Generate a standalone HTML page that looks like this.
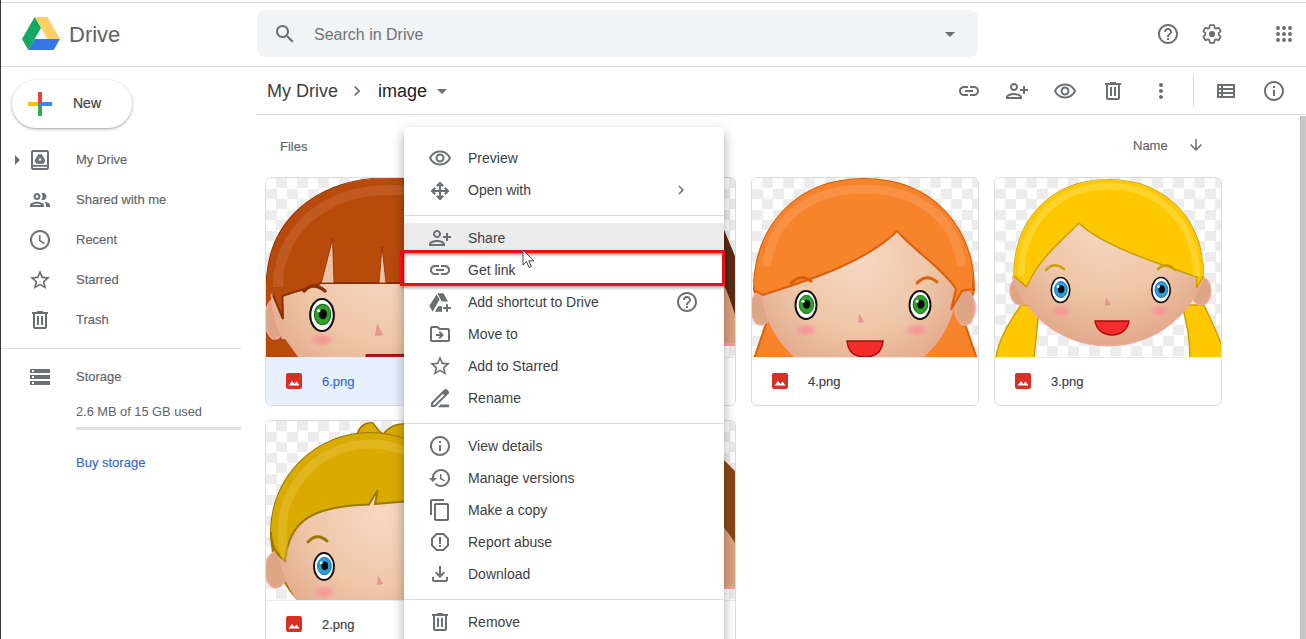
<!DOCTYPE html>
<html><head><meta charset="utf-8">
<style>
*{box-sizing:border-box;margin:0;padding:0}
html,body{width:1306px;height:639px;overflow:hidden;background:#fff;font-family:"Liberation Sans",sans-serif;color:#3c4043;position:relative}
.a{position:absolute}
.t{position:absolute;white-space:nowrap;line-height:1}
svg.i{position:absolute}
.card{position:absolute;width:228px;height:229px;border:1px solid #dadce0;border-radius:6px;overflow:hidden;background:#fff}
.card .img{position:absolute;left:0;top:0;width:226px;height:179px;overflow:hidden;
 background:conic-gradient(#ececec 25%,#fff 0 50%,#ececec 0 75%,#fff 0) 0 0/21px 21px}
.card .ft{position:absolute;left:0;top:179px;width:226px;height:49px;border-top:1px solid #e8eaed}
.card .nm{position:absolute;left:56px;top:17px;font-size:13px;color:#3c4043;line-height:1;-webkit-text-stroke:.15px currentColor}
.card .fi{position:absolute;left:20px;top:15px;width:16px;height:16px}
.mi{position:absolute;left:468px;font-size:14px;color:#3c4043;line-height:1;white-space:nowrap}
.sb{position:absolute;left:76px;font-size:13px;color:#5f6368;line-height:1;white-space:nowrap;-webkit-text-stroke:0.15px #5f6368}
</style></head><body><svg width="0" height="0" style="position:absolute">
<defs>
<radialGradient id="skin" cx="0.5" cy="0.38" r="0.6">
<stop offset="0" stop-color="#f7d8c2"/><stop offset="0.6" stop-color="#efc6a8"/><stop offset="1" stop-color="#e2ab8c"/></radialGradient>
<radialGradient id="blush"><stop offset="0" stop-color="#f7959a" stop-opacity="1"/><stop offset="0.5" stop-color="#f7959a" stop-opacity=".7"/><stop offset="1" stop-color="#f79a9a" stop-opacity="0"/></radialGradient>
</defs></svg>
<!-- top chrome line + left border -->
<div class="a" style="left:0;top:0;width:1px;height:639px;background:#3a3a3a"></div>
<div class="a" style="left:1px;top:2px;width:1305px;height:1px;background:#d9d9d9"></div>

<!-- header -->
<div class="a" style="left:1px;top:66px;width:1305px;height:1px;background:#dadce0"></div>
<svg class="a" style="left:22px;top:17px" width="38" height="33" viewBox="0 0 1443 1250">
<path fill="#3777e3" d="M240.5 1250l240.5-416.7h962l-240.5 416.7z"/>
<path fill="#ffcf63" d="M962 833.3h481L962 0H481z"/>
<path fill="#11a861" d="M0 833.3l240.5 416.7 481-833.3L481 0z"/>
</svg>
<div class="t" style="left:69px;top:24px;font-size:22px;color:#5f6368">Drive</div>

<div class="a" style="left:257px;top:10px;width:721px;height:47px;background:#f1f3f4;border-radius:8px"></div>
<div class="t" style="left:314px;top:27px;font-size:16px;color:#6f7378">Search in Drive</div>

<!-- toolbar row -->
<div class="a" style="left:256px;top:114px;width:1050px;height:1px;background:#dadce0"></div>
<div class="t" style="left:267px;top:82px;font-size:18px;color:#3c4043">My Drive</div>
<div class="t" style="left:378px;top:82px;font-size:18px;color:#202124">image</div>

<!-- scrollbar -->
<div class="a" style="left:1300px;top:116px;width:6px;height:523px;background:#c8c8c8;border-left:1px solid #bdbdbd"></div>

<!-- sidebar -->
<div class="a" style="left:12px;top:80px;width:120px;height:48px;border-radius:24px;background:#fff;box-shadow:0 1px 2px 0 rgba(60,64,67,.3),0 1px 3px 1px rgba(60,64,67,.15)"></div>
<svg class="a" style="left:28px;top:92px" width="24" height="24" viewBox="0 0 24 24">
<path d="M0 10h12v4H0z" fill="#fbbc04"/><path d="M10 12h4v12h-4z" fill="#34a853"/><path d="M12 10h12v4H12z" fill="#4285f4"/><path d="M10 0h4v12h-4z" fill="#ea4335"/></svg>
<div class="t" style="left:73px;top:96px;font-size:14px;color:#3c4043;-webkit-text-stroke:0.2px #3c4043">New</div>

<div class="sb" style="top:153px">My Drive</div>
<div class="sb" style="top:193px">Shared with me</div>
<div class="sb" style="top:233px">Recent</div>
<div class="sb" style="top:273px">Starred</div>
<div class="sb" style="top:313px">Trash</div>
<div class="a" style="left:1px;top:348px;width:240px;height:1px;background:#dadce0"></div>
<div class="sb" style="top:370px">Storage</div>
<div class="t" style="left:76px;top:406px;font-size:12.8px;color:#5f6368">2.6 MB of 15 GB used</div>
<div class="a" style="left:76px;top:427px;width:165px;height:3px;background:#e0e0e0"></div>
<div class="sb" style="top:456px;color:#3367d6;-webkit-text-stroke:0.15px #3367d6">Buy storage</div>

<!-- files -->
<div class="t" style="left:280px;top:140px;font-size:13px;color:#5f6368;-webkit-text-stroke:0.15px #5f6368">Files</div>
<div class="t" style="left:1133px;top:139px;font-size:13px;color:#5f6368;-webkit-text-stroke:0.15px #5f6368">Name</div>

<div class="card" style="left:265px;top:177px"><div class="img"><svg class="face" width="228" height="180" viewBox="0 0 228 180" style="position:absolute;left:-1px;top:-1px"><defs><clipPath id="e6"><path d="M0,0 L228,0 L228,60 L0,100 Z"/></clipPath><clipPath id="d6"><path d="M1.4,110 C1.4,45 50,1 125,1 L230,1 L230,110 Z"/><rect x="0" y="105" width="228" height="90"/></clipPath></defs>
<path d="M1.4,110 C1.4,45 50,1 125,1 L230,1 L230,181 L0,181 L0,110 Z" fill="#b84a0c"/>
<path d="M1.4,110 C1.4,45 50,1 125,1 L230,1" fill="none" stroke="#8a3000" stroke-width="1.5"/>
<ellipse cx="10" cy="142" rx="10" ry="20" fill="#dca584" stroke="#f2aaa2" stroke-width="1.5"/>
<g clip-path="url(#d6)"><circle cx="118" cy="113" r="112" fill="url(#skin)" stroke="#f0a9a0" stroke-width="1"/></g>
<path d="M0,164 L20,162 C26,170 30,176 34,181 L0,181 Z" fill="#b84a0c"/>
<g clip-path="url(#d6)">
<path d="M0,0 L0,112 L8,118 L18,142 L17.4,119 C30,114 50,110 56,106 L228,106 L228,0 Z" fill="#b84a0c"/>
<path d="M8,118 L18,142 L17.4,119 C30,114 50,110 56,106 L228,106" fill="none" stroke="#8a3000" stroke-width="2"/>
<path d="M56.3,106 L67.6,62 L69,106 Z M114,106 L117,70 L121,106 Z" fill="#eec2a1" stroke="#8a3000" stroke-width=".8"/>
</g>
<path d="M13,110 C13,55 58,13 125,13 L230,13" fill="none" stroke="#cf7040" stroke-width="10" opacity=".4"/>
<path d="M39,114 Q48,104 60,114" fill="none" stroke="#8a3000" stroke-width="3.5" stroke-linecap="round"/>
<ellipse cx="57" cy="138" rx="11.8" ry="16" fill="#fff" stroke="#111" stroke-width="2.15"/><ellipse cx="57.54" cy="137.46" rx="8.15" ry="10.30" fill="#2ea02e" stroke="#1a6a1a" stroke-width="1.07"/><ellipse cx="57.86" cy="137.14" rx="4.08" ry="5.15" fill="#0a0a0a"/><circle cx="53.78" cy="133.71" r="1.72" fill="#fff"/>
<ellipse cx="57" cy="163" rx="13" ry="7" fill="url(#blush)"/>
<path d="M112,146 L118,158 L110,159 Z" fill="#e89494"/>
<path d="M101,177.5 L150,177.5 L150,181 L101,181 Z" fill="#b8141a" stroke="#9a0a0a" stroke-width="1"/>
</svg></div><div class="ft" style="background:#e8f0fe"><svg class="fi" viewBox="0 0 16 16"><rect width="16" height="16" rx="2" fill="#d93025"/><path d="M2.5 12.5l3.5-4.5 2.5 3 2-2.5 3 4z" fill="#fff"/></svg><div class="nm" style="color:#3367d6">6.png</div></div></div>
<div class="card" style="left:508px;top:177px"><div class="img"><svg class="face" width="228" height="180" viewBox="0 0 228 180" style="position:absolute;left:-1px;top:-1px"><defs></defs><path d="M150,0 L150,180 L229,180 L229,0 Z" fill="none"/>
<path d="M150,30 L214,48 L230,86 L230,150 L216,108 L150,100 Z" fill="#5a2c12"/>
<path d="M150,100 L216,108 C222,120 226,136 230,146 L230,168 L150,168 Z" fill="#dba27f"/>
<path d="M150,166 L230,166 L230,169 L150,169 Z" fill="#f3a0a0"/>
</svg></div><div class="ft"></div></div>
<div class="card" style="left:751px;top:177px"><div class="img"><svg class="face" width="228" height="180" viewBox="0 0 228 180" style="position:absolute;left:-1px;top:-1px">
<defs><clipPath id="c4"><path d="M3,113 C3,50 45,2 113,2 C181,2 223,50 223,113 L226,182 L0,182 Z"/></clipPath></defs>
<path d="M3,113 C3,50 45,2 113,2 C181,2 223,50 223,113 L214,147 L226,182 L3,182 L15,147 Z" fill="#f7832b" stroke="#d9600d" stroke-width="2"/>
<ellipse cx="10" cy="131" rx="10" ry="17" fill="#dda684" stroke="#f2aaa2" stroke-width="1.5"/>
<ellipse cx="214" cy="131" rx="10" ry="17" fill="#dda684" stroke="#f2aaa2" stroke-width="1.5"/>
<circle cx="108" cy="106" r="98" fill="url(#skin)" stroke="#f0a9a0" stroke-width="1"/>
<g clip-path="url(#c4)">
<path d="M0,0 L0,100 L3,113 L12,118 C40,108 110,90 146,54 C165,75 192,92 205,112 L200,133 L211,114 L222,112 L228,0 Z" fill="#f7832b" stroke="#d9600d" stroke-width="2"/>
<path d="M0,0 L228,0 L228,60 A110,110 0 0 0 0,60 Z" fill="#f7832b"/>
<path d="M16,85 C22,45 55,12 113,12 C171,12 204,45 210,85" fill="none" stroke="#fba463" stroke-width="9" stroke-linecap="round" opacity=".42"/>
</g>
<path d="M40,106 Q50,96 60,104" fill="none" stroke="#d9600d" stroke-width="3" stroke-linecap="round"/>
<path d="M166,106 Q176,96 186,105" fill="none" stroke="#d9600d" stroke-width="3" stroke-linecap="round"/>
<ellipse cx="55" cy="128" rx="10.5" ry="14" fill="#fff" stroke="#111" stroke-width="1.91"/><ellipse cx="55.48" cy="127.52" rx="7.25" ry="9.16" fill="#2ea02e" stroke="#1a6a1a" stroke-width="0.95"/><ellipse cx="55.76" cy="127.24" rx="3.63" ry="4.58" fill="#0a0a0a"/><circle cx="52.14" cy="124.18" r="1.53" fill="#fff"/>
<ellipse cx="169" cy="128" rx="10.5" ry="14" fill="#fff" stroke="#111" stroke-width="1.91"/><ellipse cx="169.48" cy="127.52" rx="7.25" ry="9.16" fill="#2ea02e" stroke="#1a6a1a" stroke-width="0.95"/><ellipse cx="169.76" cy="127.24" rx="3.63" ry="4.58" fill="#0a0a0a"/><circle cx="166.14" cy="124.18" r="1.53" fill="#fff"/>
<ellipse cx="55" cy="153" rx="12" ry="7" fill="url(#blush)"/><ellipse cx="166" cy="153" rx="12" ry="7" fill="url(#blush)"/>
<path d="M108,136 L113,145 L107,146 Z" fill="#e89494"/>
<path d="M96,164 L132,164 C131,175 124,180 114,180 C104,180 97,175 96,164 Z" fill="#f42c2c" stroke="#a80c0c" stroke-width="1.5"/>
</svg></div><div class="ft"><svg class="fi" viewBox="0 0 16 16"><rect width="16" height="16" rx="2" fill="#d93025"/><path d="M2.5 12.5l3.5-4.5 2.5 3 2-2.5 3 4z" fill="#fff"/></svg><div class="nm">4.png</div></div></div>
<div class="card" style="left:994px;top:177px"><div class="img"><svg class="face" width="228" height="180" viewBox="0 0 228 180" style="position:absolute;left:-1px;top:-1px"><defs><clipPath id="c3"><path d="M20,99 C20,40 60,2.7 114.6,2.7 C169,2.7 209.3,40 209.3,99 Z"/><rect x="0" y="99" width="228" height="90"/></clipPath><clipPath id="d3"><path d="M20,99 C20,40 60,2.7 114.6,2.7 C169,2.7 209.3,40 209.3,99 Z"/><rect x="19" y="98" width="191" height="16"/></clipPath></defs>
<path d="M27,128 L44,128 C45,140 42,160 40,181 L2,181 C4,165 12,150 27,128 Z" fill="#fdc800" stroke="#c9a000" stroke-width="1.5"/>
<path d="M188,128 L210,128 C218,145 226,162 229,172 L229,181 L196,181 C196,160 192,142 188,128 Z" fill="#fdc800" stroke="#c9a000" stroke-width="1.5"/>
<path d="M20,99 C20,40 60,2.7 114.6,2.7 C169,2.7 209.3,40 209.3,99 L209,112 L22,112 Z" fill="#fdc800" stroke="#c9a000" stroke-width="1.5"/>
<ellipse cx="26" cy="114" rx="10" ry="14" fill="#dca584" stroke="#f2aaa2" stroke-width="1.2"/>
<ellipse cx="207" cy="114" rx="10" ry="14" fill="#dca584" stroke="#f2aaa2" stroke-width="1.2"/>
<g clip-path="url(#c3)"><circle cx="114" cy="68" r="101" fill="url(#skin)" stroke="#f0a9a0" stroke-width="1"/></g>
<g clip-path="url(#d3)">
<path d="M0,0 L0,99 L20,99 L32.7,110 C45,80 70,62 85,46 C105,66 150,82 203,100 L202.5,111 L209.3,99 L228,99 L228,0 Z" fill="#fdc800"/><path d="M20,99 L32.7,110 C45,80 70,62 85,46 C105,66 150,82 203,100 L202.5,111 L209.3,99" fill="none" stroke="#c9a000" stroke-width="1.5"/>
<path d="M27,99 C27,46 64,9 114.6,9 C165,9 202.5,46 202.5,99" fill="none" stroke="#ffe060" stroke-width="7" opacity=".45"/>
</g>
<path d="M52,93 Q60,84 70,92" fill="none" stroke="#c9a000" stroke-width="2.5" stroke-linecap="round"/>
<path d="M164,92 Q173,84 181,93" fill="none" stroke="#c9a000" stroke-width="2.5" stroke-linecap="round"/>
<ellipse cx="66.5" cy="113" rx="9.2" ry="12.5" fill="#fff" stroke="#111" stroke-width="1.67"/><ellipse cx="66.92" cy="112.58" rx="6.36" ry="8.03" fill="#2a9ee0" stroke="#1466a0" stroke-width="0.84"/><ellipse cx="67.17" cy="112.33" rx="3.18" ry="4.01" fill="#0a0a0a"/><circle cx="63.99" cy="109.65" r="1.34" fill="#fff"/>
<ellipse cx="167" cy="113" rx="9.2" ry="12.5" fill="#fff" stroke="#111" stroke-width="1.67"/><ellipse cx="167.42" cy="112.58" rx="6.36" ry="8.03" fill="#2a9ee0" stroke="#1466a0" stroke-width="0.84"/><ellipse cx="167.67" cy="112.33" rx="3.18" ry="4.01" fill="#0a0a0a"/><circle cx="164.49" cy="109.65" r="1.34" fill="#fff"/>
<ellipse cx="67" cy="134" rx="11" ry="6" fill="url(#blush)"/><ellipse cx="166" cy="134" rx="11" ry="6" fill="url(#blush)"/>
<path d="M112,120 L117,128 L111,129 Z" fill="#e89494"/>
<path d="M101,144 L135,144 C134,153 126,158 118,158 C110,158 102,153 101,144 Z" fill="#f42c2c" stroke="#a80c0c" stroke-width="1.3"/>
</svg></div><div class="ft"><svg class="fi" viewBox="0 0 16 16"><rect width="16" height="16" rx="2" fill="#d93025"/><path d="M2.5 12.5l3.5-4.5 2.5 3 2-2.5 3 4z" fill="#fff"/></svg><div class="nm">3.png</div></div></div>
<div class="card" style="left:265px;top:420px"><div class="img"><svg class="face" width="228" height="180" viewBox="0 0 228 180" style="position:absolute;left:-1px;top:-1px"><defs><clipPath id="e2"><path d="M0,0 L228,0 L228,84 L110,84 L20,141 L0,141 Z"/></clipPath><clipPath id="d2"><circle cx="105" cy="112" r="99"/><rect x="0" y="112" width="228" height="90"/></clipPath></defs>
<path d="M92,14 C95,6 100,2 108,3 C112,8 114,12 118,14 C125,6 132,3 142,4 L142,20 L92,20 Z" fill="#d9aa00" stroke="#9a7800" stroke-width="1.5"/>
<circle cx="105" cy="112" r="99" fill="#d9aa00" stroke="#9a7800" stroke-width="2"/>
<ellipse cx="11" cy="150" rx="11" ry="18" fill="#dca584" stroke="#f2aaa2" stroke-width="1.5"/>
<g clip-path="url(#d2)"><circle cx="117" cy="120" r="104" fill="url(#skin)" stroke="#f0a9a0" stroke-width="1"/></g>
<g clip-path="url(#d2)">
<path d="M0,0 L0,112 L6,112 C6,125 12,135 20,141 C24,100 48,86 104,84.5 L112.7,70 L110,84 C150,80 200,78 228,82 L228,0 Z" fill="#d9aa00"/><path d="M6,112 C6,125 12,135 20,141 C24,100 48,86 104,84.5 L112.7,70 L110,84 C150,80 200,78 228,82" fill="none" stroke="#9a7800" stroke-width="2"/>
</g><g clip-path="url(#e2)"><circle cx="105" cy="112" r="88" fill="none" stroke="#e8c440" stroke-width="9" opacity=".45"/></g>
<path d="M43,122 Q52,112 62,121" fill="none" stroke="#9a7800" stroke-width="3" stroke-linecap="round"/>
<ellipse cx="59" cy="146.5" rx="10" ry="13.5" fill="#fff" stroke="#111" stroke-width="1.82"/><ellipse cx="59.45" cy="146.05" rx="6.91" ry="8.73" fill="#2aa0d8" stroke="#1466a0" stroke-width="0.91"/><ellipse cx="59.73" cy="145.77" rx="3.45" ry="4.36" fill="#0a0a0a"/><circle cx="56.27" cy="142.86" r="1.45" fill="#fff"/>
<ellipse cx="59" cy="172" rx="12" ry="7" fill="url(#blush)"/>
<path d="M113,155 L118,164 L112,165 Z" fill="#e89494"/>
</svg></div><div class="ft"><svg class="fi" viewBox="0 0 16 16"><rect width="16" height="16" rx="2" fill="#d93025"/><path d="M2.5 12.5l3.5-4.5 2.5 3 2-2.5 3 4z" fill="#fff"/></svg><div class="nm">2.png</div></div></div>
<div class="card" style="left:508px;top:420px"><div class="img"><svg class="face" width="228" height="180" viewBox="0 0 228 180" style="position:absolute;left:-1px;top:-1px"><defs></defs><path d="M150,30 L216,40 C220,44 224,48 230,54 L230,128 L216,108 L150,100 Z" fill="#8a4818"/>
<path d="M150,100 L216,108 C222,114 226,122 230,128 L230,168 L150,168 Z" fill="#dba27f"/>
<path d="M150,166 L230,166 L230,169 L150,169 Z" fill="#f3a0a0"/>
</svg></div><div class="ft"></div></div>

<svg class="i" style="left:273px;top:22px;fill:#6b6f73" width="24" height="24" viewBox="0 0 24 24"><path d="M15.5 14h-.79l-.28-.27C15.41 12.59 16 11.11 16 9.5 16 5.91 13.09 3 9.5 3S3 5.91 3 9.5 5.91 16 9.5 16c1.61 0 3.09-.59 4.23-1.57l.27.28v.79l5 4.99L20.49 19l-4.99-5zm-6 0C7.01 14 5 11.99 5 9.5S7.01 5 9.5 5 14 7.01 14 9.5 11.99 14 9.5 14z"/></svg>
<svg class="i" style="left:938px;top:22px;fill:#6b6f73" width="24" height="24" viewBox="0 0 24 24"><path d="M7 10l5 5 5-5z"/></svg>
<svg class="i" style="left:1156px;top:22px;fill:#6b6f73" width="24" height="24" viewBox="0 0 24 24"><path d="M11 18h2v-2h-2v2zm1-16C6.48 2 2 6.48 2 12s4.48 10 10 10 10-4.48 10-10S17.52 2 12 2zm0 18c-4.41 0-8-3.59-8-8s3.59-8 8-8 8 3.59 8 8-3.59 8-8 8zm0-14c-2.21 0-4 1.79-4 4h2c0-1.1.9-2 2-2s2 .9 2 2c0 2-3 1.750-3 5h2c0-2.25 3-2.5 3-5 0-2.21-1.790-4-4-4z"/></svg>
<svg class="i" style="left:1200px;top:22px;fill:#6b6f73" width="24" height="24" viewBox="0 0 24 24"><path fill="none" stroke="#6b6f73" stroke-width="1.9" transform="translate(12 12) scale(.93) translate(-12 -12)" d="M19.14 12.94c.04-.3.06-.61.06-.94 0-.32-.02-.64-.07-.94l2.03-1.58c.18-.14.23-.41.12-.61l-1.92-3.32c-.12-.22-.37-.29-.59-.22l-2.39.96c-.5-.38-1.03-.7-1.62-.94l-.36-2.54c-.04-.24-.24-.41-.48-.41h-3.84c-.24 0-.43.17-.47.41l-.36 2.54c-.59.24-1.13.57-1.62.94l-2.39-.96c-.22-.08-.47 0-.59.22L2.74 8.87c-.12.21-.08.47.12.61l2.03 1.58c-.05.3-.09.63-.09.94s.02.64.07.94l-2.03 1.58c-.18.14-.23.41-.12.61l1.92 3.32c.12.22.37.29.59.22l2.39-.96c.5.38 1.03.7 1.62.94l.36 2.54c.05.24.24.41.48.41h3.84c.24 0 .44-.17.47-.41l.36-2.54c.59-.24 1.13-.56 1.62-.94l2.39.96c.22.08.47 0 .59-.22l1.92-3.32c.12-.22.07-.47-.12-.61l-2.01-1.58z"/><circle cx="12" cy="12" r="3.1"/></svg>
<svg class="i" style="left:1272px;top:22px;fill:#6b6f73" width="24" height="24" viewBox="0 0 24 24"><circle cx="6" cy="6" r="2"/><circle cx="6" cy="12" r="2"/><circle cx="6" cy="18" r="2"/><circle cx="12" cy="6" r="2"/><circle cx="12" cy="12" r="2"/><circle cx="12" cy="18" r="2"/><circle cx="18" cy="6" r="2"/><circle cx="18" cy="12" r="2"/><circle cx="18" cy="18" r="2"/></svg>
<svg class="i" style="left:347px;top:81px;fill:#6b6f73" width="20" height="20" viewBox="0 0 24 24"><path d="M10 6L8.59 7.41 13.17 12l-4.58 4.59L10 18l6-6z"/></svg>
<svg class="i" style="left:430px;top:79px;fill:#6b6f73" width="24" height="24" viewBox="0 0 24 24"><path d="M7 10l5 5 5-5z"/></svg>
<svg class="i" style="left:957px;top:79px;fill:#6b6f73" width="24" height="24" viewBox="0 0 24 24"><path d="M3.9 12c0-1.71 1.39-3.1 3.1-3.1h4V7H7c-2.76 0-5 2.24-5 5s2.24 5 5 5h4v-1.9H7c-1.71 0-3.1-1.39-3.1-3.1zM8 13h8v-2H8v2zm9-6h-4v1.9h4c1.71 0 3.1 1.39 3.1 3.1s-1.39 3.1-3.1 3.1h-4V17h4c2.76 0 5-2.24 5-5s-2.24-5-5-5z"/></svg>
<svg class="i" style="left:1005px;top:79px;fill:#6b6f73" width="24" height="24" viewBox="0 0 24 24"><path d="M9 12c2.21 0 4-1.79 4-4s-1.79-4-4-4-4 1.79-4 4 1.79 4 4 4zm0-6c1.1 0 2 .9 2 2s-.9 2-2 2-2-.9-2-2 .9-2 2-2zm0 8c-2.67 0-8 1.34-8 4v2h16v-2c0-2.66-5.33-4-8-4zm6 4H3c.22-.72 3.31-2 6-2 2.7 0 5.8 1.29 6 2zM20 10V7h-2v3h-3v2h3v3h2v-3h3v-2z"/></svg>
<svg class="i" style="left:1053px;top:79px;fill:#6b6f73" width="24" height="24" viewBox="0 0 24 24"><path d="M12 6.5c3.79 0 7.17 2.13 8.82 5.5-1.65 3.37-5.02 5.5-8.82 5.5S4.830 15.37 3.18 12C4.83 8.63 8.21 6.5 12 6.5m0-2C7 4.5 2.73 7.61 1 12c1.73 4.39 6 7.5 11 7.5s9.27-3.11 11-7.5c-1.73-4.39-6-7.5-11-7.5zm0 5c1.38 0 2.5 1.12 2.5 2.5s-1.12 2.5-2.5 2.5-2.5-1.12-2.5-2.5 1.12-2.5 2.5-2.5m0-2c-2.48 0-4.5 2.02-4.5 4.5s2.02 4.5 4.5 4.5 4.5-2.02 4.5-4.5-2.02-4.5-4.5-4.5z"/></svg>
<svg class="i" style="left:1101px;top:79px;fill:#6b6f73" width="24" height="24" viewBox="0 0 24 24"><path d="M15 4V3H9v1H4v2h1v13c0 1.1.9 2 2 2h10c1.1 0 2-.9 2-2V6h1V4h-5zm2 15H7V6h10v13zM9 8h2v9H9zm4 0h2v9h-2z"/></svg>
<svg class="i" style="left:1149px;top:79px;fill:#6b6f73" width="24" height="24" viewBox="0 0 24 24"><path d="M12 8c1.1 0 2-.9 2-2s-.9-2-2-2-2 .9-2 2 .9 2 2 2zm0 2c-1.1 0-2 .9-2 2s.9 2 2 2 2-.9 2-2-.9-2-2-2zm0 6c-1.1 0-2 .9-2 2s.9 2 2 2 2-.9 2-2-.9-2-2-2z"/></svg>
<svg class="i" style="left:1214px;top:79px;fill:#6b6f73" width="24" height="24" viewBox="0 0 24 24"><path d="M3 5v14h18V5H3zm4 2v2H5V7h2zm-2 6v-2h2v2H5zm0 2h2v2H5v-2zm14 2H9v-2h10v2zm0-4H9v-2h10v2zm0-4H9V7h10v2z"/></svg>
<svg class="i" style="left:1262px;top:79px;fill:#6b6f73" width="24" height="24" viewBox="0 0 24 24"><path d="M11 7h2v2h-2zm0 4h2v6h-2zm1-9C6.48 2 2 6.48 2 12s4.48 10 10 10 10-4.48 10-10S17.52 2 12 2zm0 18c-4.41 0-8-3.59-8-8s3.59-8 8-8 8 3.59 8 8-3.59 8-8 8z"/></svg>
<div class="a" style="left:1193px;top:75px;width:1px;height:32px;background:#dadce0"></div>
<svg class="i" style="left:13px;top:155px;fill:#6b6f73" width="8" height="10" viewBox="0 0 8 10"><path d="M2 0l5 5-5 5z"/></svg>
<svg class="i" style="left:28px;top:148px;fill:#6b6f73" width="24" height="24" viewBox="0 0 24 24"><path d="M19 2H5C3.9 2 3 2.9 3 4v16c0 1.1.9 2 2 2h14c1.1 0 2-.9 2-2V4c0-1.1-.9-2-2-2zm0 18H5v-1.2h14V20zm0-3H5V4h14v13z"/><g transform="translate(6.6 6.3) scale(.00748)"><path d="M240.5 1250l240.5-416.7h962l-240.5 416.7z M962 833.3h481L962 0H481z M0 833.3l240.5 416.7 481-833.3L481 0z"/></g></svg>
<svg class="i" style="left:28px;top:188px;fill:#6b6f73" width="24" height="24" viewBox="0 0 24 24"><path d="M9 13.75c-2.34 0-7 1.17-7 3.5V19h14v-1.75c0-2.33-4.66-3.5-7-3.5zM4.34 17c.84-.58 2.87-1.25 4.66-1.25s3.82.67 4.66 1.25H4.34zM9 12c1.93 0 3.5-1.57 3.5-3.5S10.93 5 9 5 5.5 6.57 5.5 8.5 7.07 12 9 12zm0-5c.83 0 1.5.67 1.5 1.5S9.83 10 9 10s-1.5-.67-1.5-1.5S8.17 7 9 7zm7.04 6.81c1.16.84 1.96 1.96 1.96 3.44V19h4v-1.75c0-2.02-3.5-3.17-5.96-3.44zM15 12c1.93 0 3.5-1.57 3.5-3.5S16.93 5 15 5c-.54 0-1.04.13-1.5.35.63.89 1 1.98 1 3.15s-.37 2.26-1 3.15c.46.22.96.35 1.5.35z"/></svg>
<svg class="i" style="left:28px;top:228px;fill:#6b6f73" width="24" height="24" viewBox="0 0 24 24"><path d="M11.99 2C6.47 2 2 6.48 2 12s4.47 10 9.99 10C17.52 22 22 17.52 22 12S17.52 2 11.99 2zM12 20c-4.42 0-8-3.58-8-8s3.58-8 8-8 8 3.58 8 8-3.58 8-8 8zm.5-13H11v6l5.25 3.15.75-1.23-4.5-2.67z"/></svg>
<svg class="i" style="left:28px;top:268px;fill:#6b6f73" width="24" height="24" viewBox="0 0 24 24"><path d="M22 9.24l-7.19-.62L12 2 9.19 8.63 2 9.24l5.46 4.73L5.82 21 12 17.27 18.18 21l-1.63-7.03L22 9.24zM12 15.4l-3.760 2.27 1-4.28-3.32-2.88 4.38-.38L12 6.1l1.71 4.04 4.38.38-3.32 2.88 1 4.28L12 15.4z"/></svg>
<svg class="i" style="left:28px;top:308px;fill:#6b6f73" width="24" height="24" viewBox="0 0 24 24"><path d="M15 4V3H9v1H4v2h1v13c0 1.1.9 2 2 2h10c1.1 0 2-.9 2-2V6h1V4h-5zm2 15H7V6h10v13zM9 8h2v9H9zm4 0h2v9h-2z"/></svg>
<svg class="i" style="left:28px;top:365px;fill:#6b6f73" width="24" height="24" viewBox="0 0 24 24"><path d="M2 20h20v-4H2v4zm2-3h2v2H4v-2zM2 4v4h20V4H2zm4 3H4V5h2v2zm-4 7h20v-4H2v4zm2-3h2v2H4v-2z"/></svg>
<svg class="i" style="left:1187px;top:136px;fill:#6b6f73" width="18" height="18" viewBox="0 0 24 24"><path d="M20 12l-1.41-1.41L13 16.17V4h-2v12.17l-5.58-5.59L4 12l8 8 8-8z"/></svg>
<!-- menu -->
<div class="a" style="left:404px;top:127px;width:320px;height:530px;background:#fff;border-radius:4px;box-shadow:0 5px 5px -3px rgba(0,0,0,.2),0 8px 10px 1px rgba(0,0,0,.14),0 3px 14px 2px rgba(0,0,0,.12)"></div>
<div class="a" style="left:404px;top:215px;width:320px;height:1px;background:#dadce0"></div>
<div class="a" style="left:404px;top:223px;width:320px;height:30px;background:#ebebeb"></div>
<div class="a" style="left:404px;top:423px;width:320px;height:1px;background:#dadce0"></div>
<div class="a" style="left:404px;top:599px;width:320px;height:1px;background:#dadce0"></div>
<div class="mi" style="top:151px">Preview</div>
<div class="mi" style="top:183px">Open with</div>
<div class="mi" style="top:231px">Share</div>
<div class="mi" style="top:263px">Get link</div>
<div class="mi" style="top:295px">Add shortcut to Drive</div>
<div class="mi" style="top:327px">Move to</div>
<div class="mi" style="top:359px">Add to Starred</div>
<div class="mi" style="top:391px">Rename</div>
<div class="mi" style="top:439px">View details</div>
<div class="mi" style="top:471px">Manage versions</div>
<div class="mi" style="top:503px">Make a copy</div>
<div class="mi" style="top:535px">Report abuse</div>
<div class="mi" style="top:567px">Download</div>
<div class="mi" style="top:615px">Remove</div>
<svg class="i" style="left:428px;top:146px;fill:#6b6f73" width="24" height="24" viewBox="0 0 24 24"><path d="M12 6.5c3.79 0 7.17 2.13 8.82 5.5-1.65 3.37-5.02 5.5-8.82 5.5S4.830 15.37 3.18 12C4.83 8.63 8.21 6.5 12 6.5m0-2C7 4.5 2.73 7.61 1 12c1.73 4.39 6 7.5 11 7.5s9.27-3.11 11-7.5c-1.73-4.39-6-7.5-11-7.5zm0 5c1.38 0 2.5 1.12 2.5 2.5s-1.12 2.5-2.5 2.5-2.5-1.12-2.5-2.5 1.12-2.5 2.5-2.5m0-2c-2.48 0-4.5 2.02-4.5 4.5s2.02 4.5 4.5 4.5 4.5-2.02 4.5-4.5-2.02-4.5-4.5-4.5z"/></svg>
<svg class="i" style="left:428px;top:179px;fill:#6b6f73" width="24" height="24" viewBox="0 0 24 24"><path fill="none" stroke="#6b6f73" stroke-width="2.1" d="M12 4v16M4 12h16M8.8 7.2L12 4l3.2 3.2M8.8 16.8L12 20l3.2-3.2M7.2 8.8L4 12l3.2 3.2M16.8 8.8L20 12l-3.2 3.2"/></svg>
<svg class="i" style="left:428px;top:226px;fill:#6b6f73" width="24" height="24" viewBox="0 0 24 24"><path d="M9 12c2.21 0 4-1.79 4-4s-1.79-4-4-4-4 1.79-4 4 1.79 4 4 4zm0-6c1.1 0 2 .9 2 2s-.9 2-2 2-2-.9-2-2 .9-2 2-2zm0 8c-2.67 0-8 1.34-8 4v2h16v-2c0-2.66-5.33-4-8-4zm6 4H3c.22-.72 3.31-2 6-2 2.7 0 5.8 1.29 6 2zM20 10V7h-2v3h-3v2h3v3h2v-3h3v-2z"/></svg>
<svg class="i" style="left:428px;top:258px;fill:#6b6f73" width="24" height="24" viewBox="0 0 24 24"><path d="M3.9 12c0-1.71 1.39-3.1 3.1-3.1h4V7H7c-2.76 0-5 2.24-5 5s2.24 5 5 5h4v-1.9H7c-1.71 0-3.1-1.39-3.1-3.1zM8 13h8v-2H8v2zm9-6h-4v1.9h4c1.71 0 3.1 1.39 3.1 3.1s-1.39 3.1-3.1 3.1h-4V17h4c2.76 0 5-2.24 5-5s-2.24-5-5-5z"/></svg>
<svg class="i" style="left:428px;top:290px;fill:#6b6f73" width="24" height="24" viewBox="0 0 24 24"><path d="M8.6 4.4L11.6 9.6L4.6 21.8L1.3 15.8Z M9.3 3.2H15.5L20 11.4H13.8Z M6.9 21.8L10.1 16.3H14V21.8Z M18 14.2h2v2.8h2.9v2h-2.9v2.8h-2v-2.8h-2.9v-2h2.9z"/></svg>
<svg class="i" style="left:428px;top:322px;fill:#6b6f73" width="24" height="24" viewBox="0 0 24 24"><path d="M20 6h-8l-2-2H4c-1.1 0-1.99.9-1.99 2L2 18c0 1.1.9 2 2 2h16c1.1 0 2-.9 2-2V8c0-1.1-.9-2-2-2zm0 12H4V6h5.17l2 2H20v10zm-7.84-6H8v2h4.16l-1.59 1.59L11.99 17 16 13.01 11.99 9l-1.41 1.41L12.16 12z"/></svg>
<svg class="i" style="left:428px;top:354px;fill:#6b6f73" width="24" height="24" viewBox="0 0 24 24"><path d="M22 9.24l-7.19-.62L12 2 9.19 8.63 2 9.24l5.46 4.73L5.82 21 12 17.27 18.18 21l-1.63-7.03L22 9.24zM12 15.4l-3.760 2.27 1-4.28-3.32-2.88 4.38-.38L12 6.1l1.71 4.04 4.38.38-3.32 2.88 1 4.28L12 15.4z"/></svg>
<svg class="i" style="left:428px;top:386px;fill:#6b6f73" width="24" height="24" viewBox="0 0 24 24"><path d="M20.41 4.94l-1.35-1.35c-.78-.78-2.05-.78-2.83 0L3 16.82V21h4.18L20.41 7.77c.79-.78.79-2.05 0-2.83zm-14 14.12L5 19v-1.36l9.82-9.82 1.41 1.41-9.82 9.83z"/><path d="M12.5 18.5h8.5v2.7h-11.2z"/></svg>
<svg class="i" style="left:428px;top:434px;fill:#6b6f73" width="24" height="24" viewBox="0 0 24 24"><path d="M11 7h2v2h-2zm0 4h2v6h-2zm1-9C6.48 2 2 6.48 2 12s4.48 10 10 10 10-4.48 10-10S17.52 2 12 2zm0 18c-4.41 0-8-3.59-8-8s3.59-8 8-8 8 3.59 8 8-3.59 8-8 8z"/></svg>
<svg class="i" style="left:428px;top:466px;fill:#6b6f73" width="24" height="24" viewBox="0 0 24 24"><path d="M13 3c-4.97 0-9 4.03-9 9H1l3.89 3.89.07.14L9 12H6c0-3.87 3.13-7 7-7s7 3.13 7 7-3.13 7-7 7c-1.93 0-3.68-.79-4.94-2.06l-1.42 1.42C8.27 19.99 10.51 21 13 21c4.97 0 9-4.03 9-9s-4.03-9-9-9zm-1 5v5l4.28 2.54.72-1.21-3.5-2.08V8H12z"/></svg>
<svg class="i" style="left:428px;top:498px;fill:#6b6f73" width="24" height="24" viewBox="0 0 24 24"><path d="M16 1H4c-1.1 0-2 .9-2 2v14h2V3h12V1zm3 4H8c-1.1 0-2 .9-2 2v14c0 1.1.9 2 2 2h11c1.1 0 2-.9 2-2V7c0-1.1-.9-2-2-2zm0 16H8V7h11v14z"/></svg>
<svg class="i" style="left:428px;top:530px;fill:#6b6f73" width="24" height="24" viewBox="0 0 24 24"><path d="M15.73 3H8.27L3 8.27v7.46L8.27 21h7.46L21 15.73V8.27L15.73 3zM19 14.9L14.9 19H9.1L5 14.9V9.1L9.1 5h5.8L19 9.1v5.8zM11 7h2v7h-2zM11 15h2v2h-2z"/></svg>
<svg class="i" style="left:428px;top:562px;fill:#6b6f73" width="24" height="24" viewBox="0 0 24 24"><path d="M18 15v3H6v-3H4v3c0 1.1.9 2 2 2h12c1.1 0 2-.9 2-2v-3h-2zm-1-4l-1.41-1.41L13 12.17V4h-2v8.17L8.41 9.59 7 11l5 5 5-5z"/></svg>
<svg class="i" style="left:428px;top:610px;fill:#6b6f73" width="24" height="24" viewBox="0 0 24 24"><path d="M15 4V3H9v1H4v2h1v13c0 1.1.9 2 2 2h10c1.1 0 2-.9 2-2V6h1V4h-5zm2 15H7V6h10v13zM9 8h2v9H9zm4 0h2v9h-2z"/></svg>
<svg class="i" style="left:672px;top:181px;fill:#6b6f73" width="18" height="18" viewBox="0 0 24 24"><path d="M10 6L8.59 7.41 13.17 12l-4.58 4.59L10 18l6-6z"/></svg>
<svg class="i" style="left:675px;top:290px;fill:#6b6f73" width="24" height="24" viewBox="0 0 24 24"><path d="M11 18h2v-2h-2v2zm1-16C6.48 2 2 6.48 2 12s4.48 10 10 10 10-4.48 10-10S17.52 2 12 2zm0 18c-4.41 0-8-3.59-8-8s3.59-8 8-8 8 3.59 8 8-3.59 8-8 8zm0-14c-2.21 0-4 1.79-4 4h2c0-1.1.9-2 2-2s2 .9 2 2c0 2-3 1.750-3 5h2c0-2.25 3-2.5 3-5 0-2.21-1.790-4-4-4z"/></svg>
<!-- red annotation -->
<div class="a" style="left:400px;top:250px;width:325px;height:36px;border:3px solid #ec1016;box-shadow:1px 2px 3px rgba(0,0,0,.35), inset 2px 2px 3px rgba(0,0,0,.4)"></div>
<!-- cursor -->
<svg class="a" style="left:522px;top:249px" width="14" height="20" viewBox="0 0 14 20"><path d="M1 1v15l3.5-3.3 2.6 5.8 2.3-1-2.6-5.7H12z" fill="#fff" stroke="#444" stroke-width="1"/></svg>
</body></html>
